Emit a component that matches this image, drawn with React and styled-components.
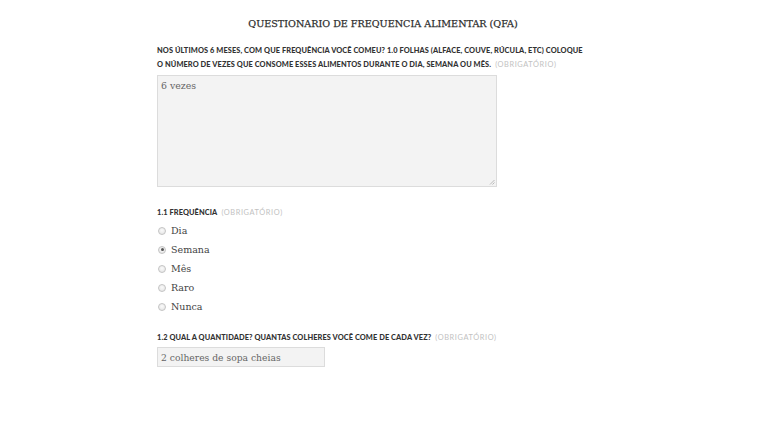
import React, { useState } from 'react'
import styled, { createGlobalStyle } from 'styled-components'

const GlobalStyle = createGlobalStyle`
  html, body {
    margin: 0;
    padding: 0;
    background: #ffffff;
  }
`

const Page = styled.div`
  width: 760px;
  height: 427px;
  overflow: hidden;
  background: #fff;
`

const Form = styled.div`
  width: 452px;
  margin-left: 157px;
  padding-top: 17px;
  display: flex;
  flex-direction: column;
`

const Title = styled.h2`
  margin: 0 0 13px;
  text-align: center;
  font-family: "DejaVu Serif", serif;
  font-size: 9.6px;
  font-weight: 400;
  line-height: 14px;
  color: #2e2e2e;
  -webkit-text-stroke: 0.25px #2e2e2e;
`

const Label = styled.div`
  font-family: Lato, "Open Sans", sans-serif;
  font-size: 7.4px;
  font-weight: 900;
  letter-spacing: 0.1px;
  line-height: 14px;
  text-transform: uppercase;
  color: #333;
  margin-bottom: ${p => p.gap ?? 3}px;
`

const Required = styled.span`
  font-weight: 400;
  color: #c2c2c2;
  letter-spacing: 0.6px;
  margin-left: 4px;
`

const TextArea = styled.div`
  box-sizing: border-box;
  width: 340px;
  height: 112px;
  background: #f3f3f3;
  border: 1px solid #dcdcdc;
  padding: 3px 3px;
  font-family: "DejaVu Serif", serif;
  font-size: 9.4px;
  line-height: 14px;
  color: #666;
  position: relative;
  margin-bottom: 19px;
`

const Grip = styled.svg`
  position: absolute;
  right: 1px;
  bottom: 1px;
`

const Options = styled.div`
  display: flex;
  flex-direction: column;
  margin-bottom: 15px;
`

const Option = styled.label`
  display: flex;
  align-items: center;
  height: 19px;
  font-family: "DejaVu Serif", serif;
  font-size: 9.5px;
  color: #444;
  cursor: pointer;
`

const Radio = styled.span`
  box-sizing: border-box;
  width: 8px;
  height: 8px;
  border-radius: 50%;
  border: 1px solid #c4c4c4;
  background: radial-gradient(circle at 50% 40%, #fafafa, #e2e2e2);
  margin: 0 5px 0 1px;
  display: flex;
  align-items: center;
  justify-content: center;
  &::after {
    content: '';
    width: 3px;
    height: 3px;
    border-radius: 50%;
    background: ${p => (p.checked ? '#555' : 'transparent')};
  }
`

const Input = styled.div`
  box-sizing: border-box;
  width: 168px;
  height: 20px;
  background: #f3f3f3;
  border: 1px solid #dcdcdc;
  padding: 0 3px;
  display: flex;
  align-items: center;
  font-family: "DejaVu Serif", serif;
  font-size: 9.2px;
  color: #666;
`

const options = ['Dia', 'Semana', 'Mês', 'Raro', 'Nunca']

export default function App() {
  const [freq, setFreq] = useState('Semana')

  return (
    <Page>
      <GlobalStyle />
      <Form>
        <Title>QUESTIONARIO DE FREQUENCIA ALIMENTAR (QFA)</Title>

        <Label>
          Nos últimos 6 meses, com que frequência você comeu? 1.0 Folhas (alface, couve, rúcula, etc) coloque
          <br />
          o número de vezes que consome esses alimentos durante o dia, semana ou mês.
          <Required>(obrigatório)</Required>
        </Label>
        <TextArea>
          6 vezes
          <Grip width="6" height="6" viewBox="0 0 6 6">
            <path d="M1 5.5 L5.5 1 M3.5 5.5 L5.5 3.5" stroke="#aaa" strokeWidth="0.8" />
          </Grip>
        </TextArea>

        <Label gap={1}>
          1.1 Frequência<Required>(obrigatório)</Required>
        </Label>
        <Options>
          {options.map(o => (
            <Option key={o} onClick={() => setFreq(o)}>
              <Radio checked={freq === o} />
              {o}
            </Option>
          ))}
        </Options>

        <Label gap={2}>
          1.2 Qual a quantidade? Quantas colheres você come de cada vez?<Required>(obrigatório)</Required>
        </Label>
        <Input>2 colheres de sopa cheias</Input>
      </Form>
    </Page>
  )
}
